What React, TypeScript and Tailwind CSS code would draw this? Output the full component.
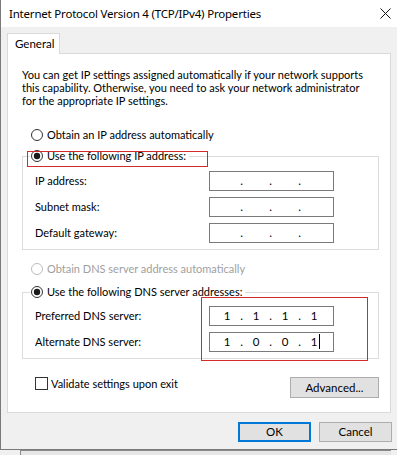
import { Fragment } from 'react'

function Radio({ checked, disabled }: { checked?: boolean; disabled?: boolean }) {
  const c = disabled ? '#bcbcbc' : '#333333'
  return (
    <svg width="12" height="12" viewBox="0 0 12 12" className="shrink-0">
      <circle cx="6" cy="6" r="5.5" fill="white" stroke={c} />
      {checked && <circle cx="6" cy="6" r="3.2" fill="#1a1a1a" />}
    </svg>
  )
}

function IpBox({ parts, caret }: { parts: string[]; caret?: boolean }) {
  return (
    <div className="w-[125px] h-[20px] border border-[#7a7a7a] bg-white flex items-center pl-[4px] text-black text-[11.5px]">
      {[0, 1, 2, 3].map((i) => (
        <Fragment key={i}>
          <span className="w-[26px] text-center">
            {caret && i === 3 ? (
              <span className="relative">
                {parts[i]}
                <span className="absolute -right-[3px] -top-[1px] -bottom-[1px] border-l border-black" />
              </span>
            ) : (
              parts[i]
            )}
          </span>
          {i < 3 && <span className="w-[3px] text-center">.</span>}
        </Fragment>
      ))}
    </div>
  )
}

function Row({ label, parts, caret }: { label: string; parts: string[]; caret?: boolean }) {
  return (
    <div className="flex items-center h-[20px]">
      <span className="w-[174px]">{label}</span>
      <IpBox parts={parts} caret={caret} />
    </div>
  )
}

const empty = ['', '', '', '']

export default function App() {
  return (
    <div className="w-[397px] h-[455px] bg-[#f0f0f0] overflow-hidden text-[11px] leading-[16px] text-black font-['Segoe_UI','Lato',sans-serif]">
      <div className="h-[450px] border-l border-b border-[#7a7a7a] flex flex-col">
        {/* Title bar */}
        <div className="h-[27px] bg-white flex items-center justify-between pl-[8px] pr-[6px] shrink-0">
          <span className="font-['Segoe_UI','Noto_Sans',sans-serif] text-[11.5px] tracking-[-0.2px]">
            Internet Protocol Version 4 (TCP/IPv4) Properties
          </span>
          <svg width="11" height="11" viewBox="0 0 11 11">
            <path d="M0.5 0.5 L10.5 10.5 M10.5 0.5 L0.5 10.5" stroke="#111" strokeWidth="1" />
          </svg>
        </div>

        <div className="pt-[6px] px-[6px]">
          {/* Tab */}
          <div className="relative z-10 -mb-px w-[53px] h-[21px] bg-white border border-b-0 border-[#d9d9d9] pl-[7px] flex items-center text-[11.5px]">
            General
          </div>

          {/* Panel */}
          <div className="relative h-[360px] border border-[#d9d9d9] bg-white pt-[14px] pl-[14px] pr-[11px]">
            <p className="leading-[13px] whitespace-nowrap">
              You can get IP settings assigned automatically if your network supports
              <br />
              this capability. Otherwise, you need to ask your network administrator
              <br />
              for the appropriate IP settings.
            </p>

            <div className="mt-[20px] ml-[9px] h-[16px] flex items-center gap-[4px]">
              <Radio />
              <span>Obtain an IP address automatically</span>
            </div>

            <fieldset className="mt-[5px] border border-[#dcdcdc]">
              <legend className="ml-[7px] pl-[1px] pr-[3px]">
                <div className="h-[16px] flex items-center gap-[4px]">
                  <Radio checked />
                  <span>Use the following IP address:</span>
                </div>
              </legend>
              <div className="pl-[12px] pt-[7px] pb-[6px] flex flex-col gap-[6px]">
                <Row label="IP address:" parts={empty} />
                <Row label="Subnet mask:" parts={empty} />
                <Row label="Default gateway:" parts={empty} />
              </div>
            </fieldset>

            <div className="mt-[11px] ml-[9px] h-[16px] flex items-center gap-[4px] text-[#a0a0a0]">
              <Radio disabled />
              <span>Obtain DNS server address automatically</span>
            </div>

            <fieldset className="mt-[7px] border border-[#dcdcdc]">
              <legend className="ml-[7px] pl-[1px] pr-[3px]">
                <div className="h-[16px] flex items-center gap-[4px]">
                  <Radio checked />
                  <span>Use the following DNS server addresses:</span>
                </div>
              </legend>
              <div className="pl-[12px] pt-[6px] pb-[6px] flex flex-col gap-[6px]">
                <Row label="Preferred DNS server:" parts={['1', '1', '1', '1']} />
                <Row label="Alternate DNS server:" parts={['1', '0', '0', '1']} caret />
              </div>
            </fieldset>

            <div className="mt-[18px] flex items-start justify-between">
              <div className="ml-[13px] h-[13px] flex items-center gap-[3px]">
                <span className="w-[13px] h-[13px] border border-[#333] bg-white shrink-0" />
                <span>Validate settings upon exit</span>
              </div>
              <button className="w-[89px] h-[21px] bg-[#e1e1e1] border border-[#adadad] flex items-center justify-center text-[11.5px]">
                Advanced...
              </button>
            </div>

            {/* red annotation boxes drawn over the dialog */}
            <div className="absolute left-[19px] top-[97px] w-[181px] h-[16px] border border-[#d42a2a]" />
            <div className="absolute left-[193px] top-[243px] w-[167px] h-[64px] border border-[#d42a2a]" />
          </div>
        </div>

        {/* Buttons */}
        <div className="mt-[9px] pr-[5px] flex justify-end gap-[8px] text-[11.5px]">
          <button className="w-[73px] h-[20px] bg-[#e1e1e1] border-2 border-[#0078d7] flex items-center justify-center">
            OK
          </button>
          <button className="w-[73px] h-[20px] bg-[#e1e1e1] border border-[#adadad] flex items-center justify-center">
            Cancel
          </button>
        </div>
      </div>

      {/* window behind */}
      <div className="h-[5px] pl-[20px]">
        <div className="w-[371px] h-full border-l border-t border-[#8a8a8a] bg-[#e6e6e6]" />
      </div>
    </div>
  )
}
